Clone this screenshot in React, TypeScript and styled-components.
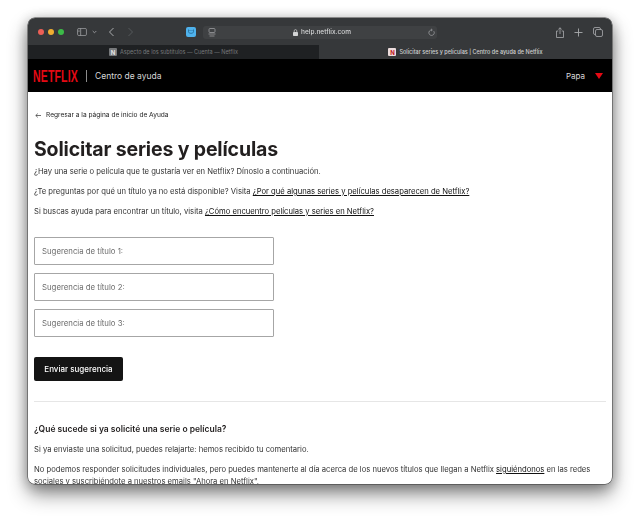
import styled, { createGlobalStyle } from "styled-components";

const GlobalStyle = createGlobalStyle`
    html, body {
        margin: 0;
        padding: 0;
        background: #ffffff;
        overflow: hidden;
    }
    * {
        box-sizing: border-box;
    }
`

function SidebarIcon() {
    return (
        <svg width="10" height="8" viewBox="0 0 11 9" fill="none" stroke="#a9abad" strokeWidth="0.8">
            <rect x="0.5" y="0.5" width="10" height="8" rx="1.5" />
            <path d="M4 0.5v8M1.5 2.5h1.2M1.5 4h1.2" />
        </svg>
    );
}

function ChevronDown() {
    return (
        <svg width="5" height="4" viewBox="0 0 5 4" fill="none" stroke="#a9abad" strokeWidth="0.8">
            <path d="M0.7 1l1.8 1.8L4.3 1" />
        </svg>
    );
}

function Chevron({ dir, color }: { dir: "left" | "right"; color: string }) {
    return (
        <svg width="7" height="10" viewBox="0 0 7 10" fill="none" stroke={color} strokeWidth="1">
            <path d={dir === "left" ? "M5.5 1L1.5 5l4 4" : "M1.5 1l4 4-4 4"} />
        </svg>
    );
}

function ExtensionIcon() {
    return (
        <svg width="10" height="10" viewBox="0 0 10 10">
            <rect width="10" height="10" rx="2" fill="#4fb2ec" />
            <path d="M2.5 2.5v2.2c0 1 1 1.6 2.5 1.6s2.5-.6 2.5-1.6V2.5" fill="none" stroke="#1c5f8d" strokeWidth="0.7" />
            <path d="M4 3v1M6 3v1" stroke="#1c5f8d" strokeWidth="0.7" />
        </svg>
    );
}

function ReaderIcon() {
    return (
        <svg width="8" height="9" viewBox="0 0 8 9" fill="none" stroke="#a9abad" strokeWidth="0.7">
            <rect x="1" y="0.5" width="6" height="4" rx="1" />
            <path d="M0.5 6h7M1.5 8h5" />
        </svg>
    );
}

function LockIcon() {
    return (
        <svg width="5" height="7" viewBox="0 0 5 7">
            <path d="M1.2 3V1.9a1.3 1.3 0 0 1 2.6 0V3" fill="none" stroke="#d4d5d6" strokeWidth="0.7" />
            <rect y="3" width="5" height="4" rx="0.7" fill="#d4d5d6" />
        </svg>
    );
}

function ReloadIcon() {
    return (
        <svg width="7" height="8" viewBox="0 0 7 8" fill="none" stroke="#a9abad" strokeWidth="0.7">
            <path d="M5.8 3.2A2.7 2.7 0 1 1 3.5 2" />
            <path d="M3 0.8L4.3 2 3 3.1" />
        </svg>
    );
}

function ShareIcon() {
    return (
        <svg width="8" height="11" viewBox="0 0 8 11" fill="none" stroke="#a9abad" strokeWidth="0.8">
            <path d="M2.3 4H0.5v6.5h7V4H5.7M4 7V0.8M2.3 2.4L4 0.8l1.7 1.6" />
        </svg>
    );
}

function PlusIcon() {
    return (
        <svg width="9" height="9" viewBox="0 0 9 9" fill="none" stroke="#a9abad" strokeWidth="0.9">
            <path d="M4.5 0.5v8M0.5 4.5h8" />
        </svg>
    );
}

function TabsIcon() {
    return (
        <svg width="10" height="10" viewBox="0 0 10 10" fill="none" stroke="#a9abad" strokeWidth="0.8">
            <path d="M2.5 7.5H2A1.5 1.5 0 0 1 .5 6V2A1.5 1.5 0 0 1 2 .5h4A1.5 1.5 0 0 1 7.5 2v.5" />
            <rect x="2.5" y="2.5" width="7" height="7" rx="1.5" />
        </svg>
    );
}

function BackArrow() {
    return (
        <svg width="6" height="5" viewBox="0 0 6 5" fill="none" stroke="#333333" strokeWidth="0.7">
            <path d="M6 2.5H0.8M2.8 0.6L0.8 2.5l2 1.9" />
        </svg>
    );
}

function Caret() {
    return (
        <svg width="8" height="6" viewBox="0 0 8 6">
            <path d="M0 0h8L4 6z" fill="#e50914" />
        </svg>
    );
}

export default function App() {
    return (
        <>
            <GlobalStyle />
            <Desktop>
                <Window>
                    <Toolbar>
                        <Lights>
                            <Light $color="#ec5f56" />
                            <Light $color="#f0ae31" />
                            <Light $color="#3cbb48" />
                        </Lights>
                        <SidebarGroup>
                            <SidebarIcon />
                            <ChevronDown />
                        </SidebarGroup>
                        <NavGroup>
                            <Chevron dir="left" color="#a9abad" />
                            <Chevron dir="right" color="#55585b" />
                        </NavGroup>
                        <ExtensionSlot>
                            <ExtensionIcon />
                        </ExtensionSlot>
                        <UrlField>
                            <ReaderIcon />
                            <UrlText>
                                <LockIcon />
                                help.netflix.com
                            </UrlText>
                            <ReloadIcon />
                        </UrlField>
                        <Actions>
                            <ShareIcon />
                            <PlusIcon />
                            <TabsIcon />
                        </Actions>
                    </Toolbar>
                    <TabBar>
                        <Tab>
                            <Favicon $active={false}>N</Favicon>
                            Aspecto de los subtítulos — Cuenta — Netflix
                        </Tab>
                        <Tab $active>
                            <Favicon $active>N</Favicon>
                            Solicitar series y películas | Centro de ayuda de Netflix
                        </Tab>
                    </TabBar>
                    <SiteHeader>
                        <Logo>
                            <LogoText>NETFLIX</LogoText>
                        </Logo>
                        <HeaderDivider />
                        <HelpTitle>Centro de ayuda</HelpTitle>
                        <UserMenu>
                            Papa
                            <Caret />
                        </UserMenu>
                    </SiteHeader>
                    <Content>
                        <BackLink>
                            <BackArrow />
                            Regresar a la página de inicio de Ayuda
                        </BackLink>
                        <Title>Solicitar series y películas</Title>
                        <Paragraph>¿Hay una serie o película que te gustaría ver en Netflix? Dínoslo a continuación.</Paragraph>
                        <Paragraph>
                            ¿Te preguntas por qué un título ya no está disponible? Visita <u>¿Por qué algunas series y películas desaparecen de Netflix?</u>
                        </Paragraph>
                        <Paragraph>
                            Si buscas ayuda para encontrar un título, visita <u>¿Cómo encuentro películas y series en Netflix?</u>
                        </Paragraph>
                        <Form>
                            <Field>Sugerencia de título 1:</Field>
                            <Field>Sugerencia de título 2:</Field>
                            <Field>Sugerencia de título 3:</Field>
                        </Form>
                        <SubmitButton>Enviar sugerencia</SubmitButton>
                        <Rule />
                        <SectionTitle>¿Qué sucede si ya solicité una serie o película?</SectionTitle>
                        <Paragraph>Si ya enviaste una solicitud, puedes relajarte: hemos recibido tu comentario.</Paragraph>
                        <Paragraph>
                            No podemos responder solicitudes individuales, pero puedes mantenerte al día acerca de los nuevos títulos que llegan a Netflix <u>siguiéndonos</u> en las redes sociales y suscribiéndote a nuestros emails "Ahora en Netflix".
                        </Paragraph>
                    </Content>
                </Window>
            </Desktop>
        </>
    );
}

const Desktop = styled.div`
    width: 640px;
    height: 521px;
    padding: 18px 28px 37px;
    background: #ffffff;
    overflow: hidden;
`

const Window = styled.div`
    width: 584px;
    height: 466px;
    border-radius: 7px;
    overflow: hidden;
    display: flex;
    flex-direction: column;
    background: #ffffff;
    box-shadow: 0 0 0 0.5px #3a3a3a, 0 10px 20px rgba(0, 0, 0, 0.45), 0 2px 14px rgba(0, 0, 0, 0.3);
    font-family: Inter, "Liberation Sans", sans-serif;
    filter: blur(0.25px);
`

const Toolbar = styled.div`
    height: 27px;
    flex: none;
    display: flex;
    align-items: center;
    padding: 1px 9px 0 10px;
    background: #36383a;
`

const Lights = styled.div`
    display: flex;
    gap: 4px;
`

const Light = styled.span<{ $color: string }>`
    width: 6px;
    height: 6px;
    border-radius: 50%;
    background: ${(p) => p.$color};
`

const SidebarGroup = styled.div`
    display: flex;
    align-items: center;
    gap: 5px;
    margin-left: 13px;
`

const NavGroup = styled.div`
    display: flex;
    align-items: center;
    gap: 12px;
    margin-left: 11px;
`

const ExtensionSlot = styled.div`
    display: flex;
    margin-left: 52px;
`

const UrlField = styled.div`
    width: 234px;
    height: 13px;
    margin-left: 7px;
    padding: 0 2px 0 5px;
    display: flex;
    align-items: center;
    justify-content: space-between;
    border-radius: 3px;
    background: #3f4143;
`

const UrlText = styled.span`
    display: flex;
    align-items: center;
    gap: 3px;
    font-size: 6.5px;
    color: #d4d5d6;
    font-weight: 500;
`

const Actions = styled.div`
    margin-left: auto;
    display: flex;
    align-items: center;
    gap: 10px;
`

const TabBar = styled.div`
    height: 14px;
    flex: none;
    display: grid;
    grid-template-columns: 291px 1fr;
    background: #36383a;
`

const Tab = styled.div<{ $active?: boolean }>`
    display: flex;
    align-items: center;
    justify-content: center;
    gap: 3px;
    font-size: 5.5px;
    font-weight: ${(p) => (p.$active ? 500 : 400)};
    white-space: nowrap;
    color: ${(p) => (p.$active ? "#cfd0d1" : "#77797b")};
    background: ${(p) => (p.$active ? "#36383a" : "#1f2123")};
`

const Favicon = styled.span<{ $active: boolean }>`
    width: 8px;
    height: 8px;
    display: flex;
    align-items: center;
    justify-content: center;
    font-size: 6px;
    font-weight: 700;
    border-radius: 1px;
    color: ${(p) => (p.$active ? "#c01620" : "#e4e4e4")};
    background: ${(p) => (p.$active ? "#ecdcdc" : "#77797b")};
`

const SiteHeader = styled.div`
    height: 33px;
    flex: none;
    display: flex;
    align-items: center;
    padding: 0 9px 0 5px;
    background: #000000;
`

const Logo = styled.div`
    width: 46px;
    overflow: visible;
`

const LogoText = styled.span`
    display: inline-block;
    font-family: "Liberation Sans", sans-serif;
    font-size: 16px;
    font-weight: 700;
    line-height: 16px;
    letter-spacing: 0.2px;
    color: #e50914;
    transform: scaleX(0.66);
    transform-origin: left center;
`

const HeaderDivider = styled.span`
    width: 1px;
    height: 12px;
    margin: 0 8px 0 7px;
    background: #8c8c8c;
`

const HelpTitle = styled.span`
    font-size: 8.5px;
    color: #d8d8d8;
`

const UserMenu = styled.div`
    margin-left: auto;
    display: flex;
    align-items: center;
    gap: 10px;
    font-size: 8px;
    color: #d8d8d8;
`

const Content = styled.div`
    flex: 1;
    min-height: 0;
    overflow: hidden;
    padding: 19px 6px 0;
    color: #333333;
`

const BackLink = styled.div`
    display: flex;
    align-items: center;
    gap: 5px;
    height: 9px;
    padding-left: 1px;
    font-size: 6.6px;
    line-height: 9px;
    color: #222222;
`

const Title = styled.h1`
    margin: 16px 0 4px;
    font-size: 19.5px;
    line-height: 26px;
    font-weight: 700;
    letter-spacing: -0.15px;
    color: #221f1f;
`

const Paragraph = styled.p`
    margin: 0 0 8px;
    font-size: 7.65px;
    line-height: 12px;
    color: #333333;
    u {
        color: #111111;
    }
`

const Form = styled.div`
    display: flex;
    flex-direction: column;
    gap: 8px;
    margin-top: 19px;
`

const Field = styled.div`
    width: 240px;
    height: 28px;
    display: flex;
    align-items: center;
    padding-left: 7px;
    border: 1px solid #a6a6a6;
    border-radius: 1px;
    font-size: 7.8px;
    color: #6d6d6d;
`

const SubmitButton = styled.div`
    width: 89px;
    height: 24px;
    margin-top: 20px;
    display: flex;
    align-items: center;
    justify-content: center;
    border-radius: 2px;
    font-size: 8px;
    font-weight: 500;
    color: #ffffff;
    background: #141414;
`

const Rule = styled.div`
    height: 1px;
    margin-top: 20px;
    background: #e6e6e6;
`

const SectionTitle = styled.h3`
    margin: 22px 0 9px;
    font-size: 8.5px;
    line-height: 11px;
    font-weight: 600;
    color: #221f1f;
`
